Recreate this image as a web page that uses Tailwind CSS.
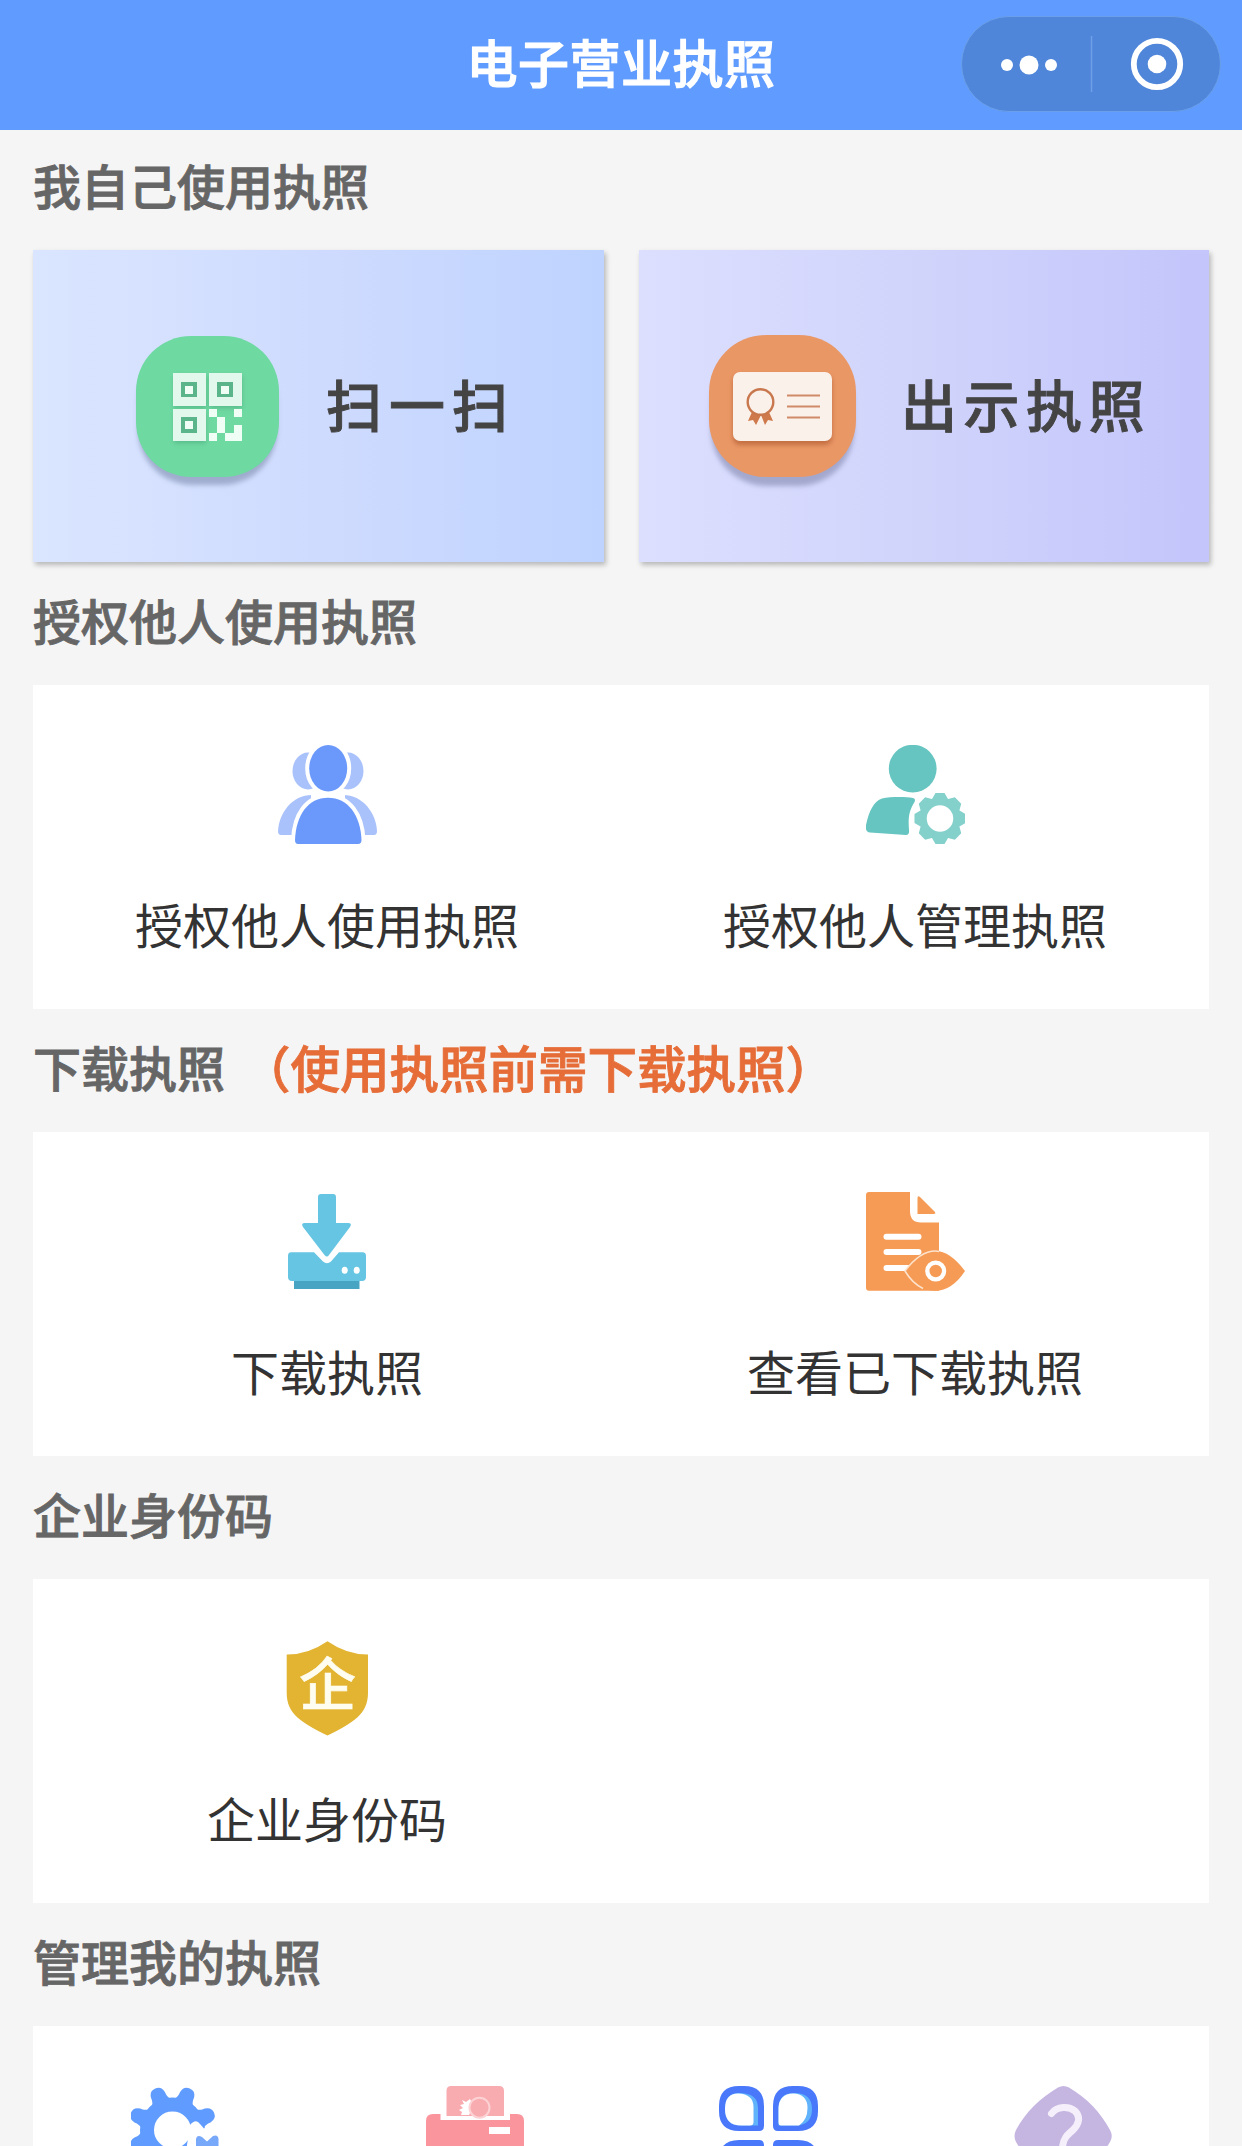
<!DOCTYPE html>
<html lang="zh-CN">
<head>
<meta charset="utf-8">
<title>电子营业执照</title>
<script src="https://cdn.jsdelivr.net/npm/@tailwindcss/browser@4"></script>
</head>
<body class="w-[1242px] h-[2146px] overflow-hidden bg-[#f5f5f5] font-['Noto_Sans_CJK_SC',sans-serif] text-[48px] text-[#333]">
<header class="relative h-[130px] bg-[#609cff] flex justify-center">
  <h1 class="text-[51px] leading-[123px] font-medium text-white tracking-[0.5px] [-webkit-text-stroke:1.2px_#fff]">电子营业执照</h1>
  <div class="absolute left-[961px] top-4 w-[260px] h-24 rounded-full bg-[#4f86da] border border-[#6b9fea]">
    <svg class="block w-[258px] h-[94px]" viewBox="0 0 258 94">
      <g fill="#fff"><circle cx="45" cy="48" r="6"/><circle cx="67" cy="48" r="9.5"/><circle cx="89" cy="48" r="6"/><circle cx="195" cy="47" r="9.3"/></g>
      <path d="M129.500 19V75" stroke="#6f9fe6" stroke-width="1.500"/>
      <circle cx="195" cy="47" r="23.200" fill="none" stroke="#fff" stroke-width="5.800"/>
    </svg>
  </div>
</header>
<main class="px-[33px]">
  <h2 class="h-[120px] leading-[109px] font-medium text-[#666] [-webkit-text-stroke:0.9px_#666]">我自己使用执照</h2>
  <div class="flex justify-between">
    <section class="w-[571px] h-[312px] flex items-center pl-[103px] bg-linear-to-r from-[#dae6ff] via-[#cfdbfe] to-[#bed3ff] shadow-[2px_3px_5px_rgba(0,0,0,0.25)]">
      <svg class="mt-[2px] w-[143px] h-[142px] overflow-visible shrink-0" viewBox="0 0 143 142">
        <defs><filter id="soft" x="-20%" y="-20%" width="140%" height="150%"><feGaussianBlur stdDeviation="2.500"/></filter></defs>
        <rect x="2" y="11" width="139" height="138" rx="55" fill="#8e9bbd" opacity=".75" filter="url(#soft)"/>
        <rect width="143" height="141" rx="55" fill="#6fd9a2"/>
        <g fill="#3f9c70" opacity=".5" filter="url(#soft)"><path d="M38 40h32v32H38zM74 40h32v32H74zM38 76h32v31H38z"/></g>
        <g fill="#e3f8ec"><path d="M37 37h33v33H37zM73 37h33v33H73zM37 73h33v32H37z"/></g>
        <path fill="#f0fff6" d="M73 73h8v8h8v16h-8v-16h-8zM98 73h8v8h-8zM98 89h8v16H89v-8h9zM73 97h8v8h-8z"/>
        <path fill="#5bb58a" d="M45 46h16v15H45zM81 46h16v15H81zM45 81h16v16H45z"/>
        <path fill="#f0fff6" d="M49 50h8v8h-8zM85 50h8v8h-8zM49 85h8v8h-8z"/>
      </svg>
      <span class="ml-[47px] mb-[7px] text-[56px] leading-[64px] font-medium tracking-[7px] text-[#444] whitespace-nowrap [-webkit-text-stroke:0.9px_#444]">扫一扫</span>
    </section>
    <section class="w-[570px] h-[312px] flex items-center pl-[70px] bg-linear-to-r from-[#dcdffe] via-[#d0d4fb] to-[#c3c5fb] shadow-[2px_3px_5px_rgba(0,0,0,0.25)]">
      <svg class="w-[147px] h-[143px] overflow-visible shrink-0" viewBox="0 0 147 143">
        <rect x="2" y="13" width="143" height="138" rx="56" fill="#8e93b9" opacity=".7" filter="url(#soft)"/>
        <rect width="147" height="142" rx="57" fill="#ea9766"/>
        <rect x="24" y="40" width="99" height="70" rx="7" fill="#a9532a" opacity=".6" filter="url(#soft)"/>
        <rect x="24" y="37" width="99" height="69" rx="7" fill="#faf1ea"/>
        <path d="M43 77l-4 9 5-1 3 5 5-10 4 10 3-5 5 1-4-9z" fill="#cf7a4c"/>
        <circle cx="51.500" cy="67" r="12.800" fill="#faf1ea" stroke="#c9774d" stroke-width="2.400"/>
        <path d="M78 60.500h33M78 71.500h33M78 82.500h33" stroke="#cf8a67" stroke-width="2"/>
      </svg>
      <span class="ml-[45px] mb-[7px] text-[56px] leading-[64px] font-medium tracking-[6.5px] text-[#444] whitespace-nowrap [-webkit-text-stroke:0.9px_#444]">出示执照</span>
    </section>
  </div>

  <h2 class="h-[123px] leading-[115px] font-medium text-[#666] [-webkit-text-stroke:0.9px_#666]">授权他人使用执照</h2>
  <section class="h-[324px] bg-white grid grid-cols-2 pt-[60px]">
    <div class="flex flex-col items-center">
      <svg class="w-[99px] h-[99px]" viewBox="0 0 99 99">
        <g fill="#a9c2fb"><ellipse cx="30" cy="26" rx="15.500" ry="18.500"/><ellipse cx="70" cy="26" rx="15.500" ry="18.500"/>
        <path d="M3 90Q0 90 0 86C1 68 14 50 34 50H65C85 50 98 68 99 86Q99 90 96 90z"/></g>
        <path fill="#fff" d="M33 44H67V53H33z"/>
        <path d="M20 99Q17 99 17 95C18 70 30 52.700 50 52.700S82.500 70 83.500 95Q83.500 99 80 99z" fill="#6b99fb" stroke="#fff" stroke-width="8" paint-order="stroke"/>
        <ellipse cx="50.200" cy="23.300" rx="19" ry="23.300" fill="#6b99fb" stroke="#fff" stroke-width="8" paint-order="stroke"/>
      </svg>
      <span class="mt-[55px] leading-[48px]">授权他人使用执照</span>
    </div>
    <div class="flex flex-col items-center">
      <svg class="w-[99px] h-[99px]" viewBox="0 0 99 99">
        <circle cx="46.700" cy="23.700" r="23.900" fill="#66c5c0"/>
        <path d="M0 80C3 66 8 56 16 53.500C25 51.500 40 51.700 47 53Q50 53.500 48.500 57C43 66 42 72 43 85Q43.500 90 40 90L4 87.500Q-1 87 0 80z" fill="#66c5c0"/>
        <g fill="#84d0cb">
          <circle cx="74" cy="73.500" r="17" fill="none" stroke="#84d0cb" stroke-width="7.500"/>
          <path id="tooth" d="M66 54L69.500 48H78.500L82 54V58H66z"/>
          <use href="#tooth" transform="rotate(45 74 73.500)"/><use href="#tooth" transform="rotate(90 74 73.500)"/><use href="#tooth" transform="rotate(135 74 73.500)"/><use href="#tooth" transform="rotate(180 74 73.500)"/><use href="#tooth" transform="rotate(225 74 73.500)"/><use href="#tooth" transform="rotate(270 74 73.500)"/><use href="#tooth" transform="rotate(315 74 73.500)"/>
        </g>
      </svg>
      <span class="mt-[55px] leading-[48px]">授权他人管理执照</span>
    </div>
  </section>

  <h2 class="h-[123px] leading-[115px] font-medium text-[#666] flex whitespace-nowrap [-webkit-text-stroke:0.9px]"><span>下载执照</span><span class="ml-[16px] text-[49.5px] text-[#e66d38]">（使用执照前需下载执照）</span></h2>
  <section class="h-[324px] bg-white grid grid-cols-2 pt-[60px]">
    <div class="flex flex-col items-center">
      <svg class="w-[99px] h-[99px]" viewBox="0 0 99 99">
        <path d="M16 87H81.500V97H16z" fill="#47a5c3"/>
        <path d="M13 60.300H36L45 69.500Q49 73 53 69.500L61 60.300H84.500Q88 60.300 88 64V85Q88 89 84 89H14Q10 89 10 85V64Q10 60.300 13 60.300z" fill="#66c5e2"/>
        <path d="M43 2H55Q58 2 58 5V31H70Q74.500 31 72 35L51 63Q49 66 46.500 63L25 35Q22.500 31 27 31H40V5Q40 2 43 2z" fill="#66c5e2"/>
        <g fill="#fff"><ellipse cx="66.700" cy="78.300" rx="3" ry="3.500"/><ellipse cx="78.700" cy="78.300" rx="3" ry="3.500"/></g>
      </svg>
      <span class="mt-[55px] leading-[48px]">下载执照</span>
    </div>
    <div class="flex flex-col items-center">
      <svg class="w-[99px] h-[99px]" viewBox="0 0 99 99">
        <path d="M3 0H44V19Q44 30.500 55 30.500H73V98.700H3Q0 98.700 0 95.500V3Q0 0 3 0z" fill="#f69b55"/>
        <path d="M51.500 6Q51.500 3 54 5L68.500 19.500Q70.500 22 67.500 22H51.500z" fill="#f69b55"/>
        <path d="M20.500 44.700H52.500M20.500 60H52.500M20.500 76H42" stroke="#fff" stroke-width="6" stroke-linecap="round"/>
        <path d="M39 79Q54 59 69.500 59Q84 59 99 79Q86 98.700 69.500 98.700Q52 98.700 39 79z" fill="#f69b55"/>
        <path d="M73 59.500Q71 59 69.500 59Q54 59 39 79Q46 91 57 96.500" fill="none" stroke="#fde3cd" stroke-width="1.500"/>
        <ellipse cx="69.700" cy="79" rx="8.400" ry="8.400" fill="none" stroke="#fff" stroke-width="4.300"/>
      </svg>
      <span class="mt-[55px] leading-[48px]">查看已下载执照</span>
    </div>
  </section>

  <h2 class="h-[123px] leading-[115px] font-medium text-[#666] [-webkit-text-stroke:0.9px_#666]">企业身份码</h2>
  <section class="h-[324px] bg-white grid grid-cols-2 pt-[61px]">
    <div class="flex flex-col items-center">
      <svg class="w-[99px] h-[99px]" viewBox="0 0 99 99">
        <path d="M49.500 1.300Q69 14.800 90 14.500V53C90 74 75 83 49.500 95.500C24 83 8.700 74 8.700 53V14.500Q30 14.800 49.500 1.300z" fill="#e2b432"/>
        <text x="49.500" y="65" text-anchor="middle" font-size="57" font-weight="500" fill="#fffdf0" stroke="#fffdf0" stroke-width=".6">企</text>
      </svg>
      <span class="mt-[54px] leading-[48px]">企业身份码</span>
    </div>
  </section>

  <h2 class="h-[123px] leading-[115px] font-medium text-[#666] [-webkit-text-stroke:0.9px_#666]">管理我的执照</h2>
  <section class="h-[120px] overflow-hidden bg-white grid grid-cols-4 pt-[60px] justify-items-center items-start">
    <svg class="w-[99px] h-[99px]" viewBox="0 0 99 99">
      <g fill="#609cff">
        <circle cx="41.500" cy="44" r="25.500" fill="none" stroke="#609cff" stroke-width="14"/>
        <path id="cog" d="M27 18C34 14 34 9 34 6Q35 -1 41.500 -1T49 6C49 9 49 14 56 18z" transform="rotate(22.500 41.500 44)"/>
        <use href="#cog" transform="rotate(45 41.500 44)"/><use href="#cog" transform="rotate(-45 41.500 44)"/><use href="#cog" transform="rotate(-90 41.500 44)"/><use href="#cog" transform="rotate(-135 41.500 44)"/><use href="#cog" transform="rotate(180 41.500 44)"/>
      </g>
      <path d="M59 39Q65 32 69 38L73 42.500L80 38H99V99H50z" fill="#fff"/>
      <path d="M65 64V53Q66 48 71 51L76 55.500L82 50Q87 48 87.500 53V64z" fill="#78a8fa"/>
    </svg>
    <svg class="w-[99px] h-[99px]" viewBox="0 0 99 99">
      <path d="M26 0H74Q79 0 79 5V30H21.500V5Q21.500 0 26 0z" fill="#f8acb0"/>
      <path d="M37 14l4 2 4-3 2 4-3 4 2 4-2 4h-8l1-3-3-2 4-2-3-3 4-1z" fill="#fff"/>
      <circle cx="54.500" cy="21.700" r="10" fill="#f8acb0" stroke="#fcd2d4" stroke-width="2"/>
      <path d="M8 28H15.500V34H85V28H92Q99 28 99 35V99H1V35Q1 28 8 28z" fill="#fa959d"/>
      <path d="M64 41H85V48H64z" fill="#fff"/>
    </svg>
    <svg class="w-[99px] h-[99px]" viewBox="0 0 99 99">
      <g fill="#4a78fb">
        <path d="M20 0H25Q45 0 45 20V40Q45 45 40 45H20Q0 45 0 25V20Q0 0 20 0z"/>
        <path d="M74 0H79Q99 0 99 20V25Q99 45 79 45H59Q54 45 54 40V20Q54 0 74 0z"/>
        <path d="M20 54H40Q45 54 45 59V99H0V74Q0 54 20 54zM59 54H79Q99 54 99 74V99H54V59Q54 54 59 54z"/>
      </g>
      <path d="M20 7Q39 7 39 22V39.500H22Q6 39.500 6 23Q6 7 20 7zM75 7Q93 7 93 23T77 39.500H59.500V22Q60 7 75 7z" fill="#60b3fb"/>
      <path d="M19 7.500Q34.500 8 34.500 21V36Q34.500 39.500 31 39.500H22Q6 39.500 6 23Q6 7.500 19 7.500zM74 7.500Q88.500 8 88.500 22Q88.500 34 80 39.500H62Q59.500 39.500 59.500 36V22Q60 8 74 7.500z" fill="#fff"/>
    </svg>
    <svg class="w-[99px] h-[99px]" viewBox="0 0 99 99">
      <path d="M45 1.500Q50.500 -1.500 56 1.500C74 12 88 27 97 44Q100.500 50 97 56Q80 84 56 97.500Q50.500 101 45 97.500Q20 84 3 56Q0 50 3 44C12 27 27 12 45 1.500z" fill="#c5b6e1"/>
      <path d="M38.500 27.500C44 20 56 20 62 25C68 31 66 38 60 44C54 49 50 53 49.500 61" fill="none" stroke="#f4effa" stroke-width="7" stroke-linecap="round"/>
    </svg>
  </section>
</main>
</body>
</html>
